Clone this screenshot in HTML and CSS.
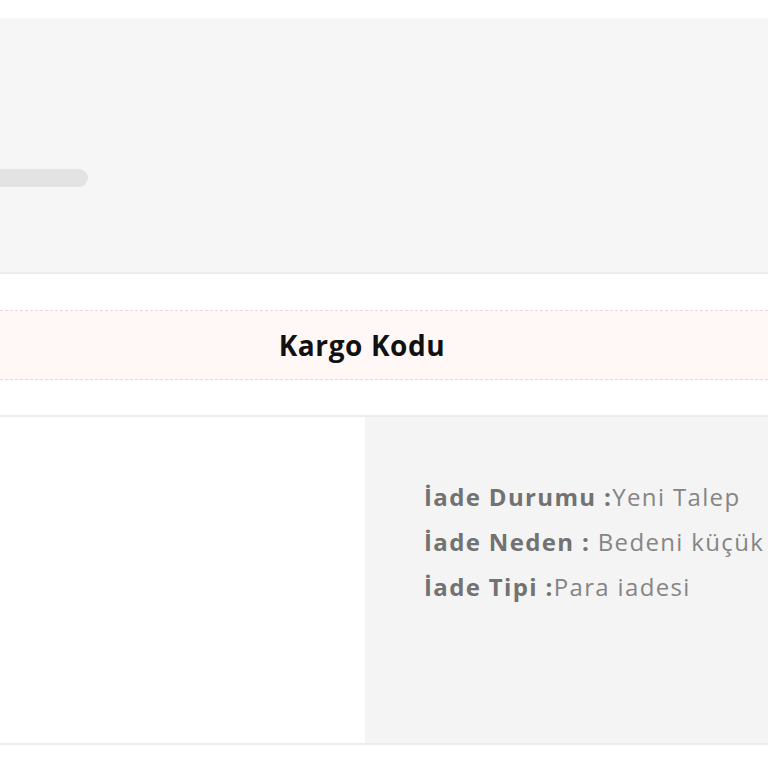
FILE: index.html
```html
<!DOCTYPE html>
<html lang="tr">
<head>
<meta charset="utf-8">
<link rel="stylesheet" href="styles.css">
</head>
<body>
<div class="hero">
  <div class="pill"></div>
</div>
<div class="cargo">
  <div class="cargo-box">Kargo Kodu</div>
</div>
<div class="details">
  <div class="details-left"></div>
  <div class="details-right">
    <div class="line"><b>İade Durumu :</b>Yeni Talep</div>
    <div class="line"><b>İade Neden :</b> Bedeni küçük</div>
    <div class="line"><b>İade Tipi :</b>Para iadesi</div>
  </div>
</div>
</body>
</html>
```
FILE: styles.css
```css
html, body {
  margin: 0;
  padding: 0;
  background: #ffffff;
  font-family: "Open Sans", "Lato", sans-serif;
  overflow: hidden;
}
.hero {
  margin-top: 18px;
  height: 256px;
  background: #f6f6f6;
  border-bottom: 2px solid #ececec;
  padding-top: 151px;
  box-sizing: border-box;
}
.pill {
  width: 88px;
  height: 18px;
  background: #e3e3e3;
  border-radius: 0 9px 9px 0;
}
.cargo {
  padding: 36px 0 35px;
  border-bottom: 2px solid #ececec;
}
.cargo-box {
  height: 68px;
  border-top: 1px dashed #eed6d6;
  border-bottom: 1px dashed #eed6d6;
  background: #fff8f7;
  display: flex;
  align-items: center;
  justify-content: center;
  font-weight: 700;
  font-size: 28px;
  letter-spacing: 0.6px;
  color: #111;
  padding-right: 44px;
}
.details {
  display: grid;
  grid-template-columns: 365px 1fr;
  height: 326px;
  border-bottom: 2px solid #ececec;
}
.details-left {
  background: #ffffff;
}
.details-right {
  background: #f4f4f4;
  padding: 57px 0 0 59px;
  white-space: nowrap;
}
.line {
  font-size: 24px;
  line-height: 45px;
  letter-spacing: 1.35px;
  color: #858585;
}
.line b {
  color: #727272;
  font-weight: 700;
}
```
